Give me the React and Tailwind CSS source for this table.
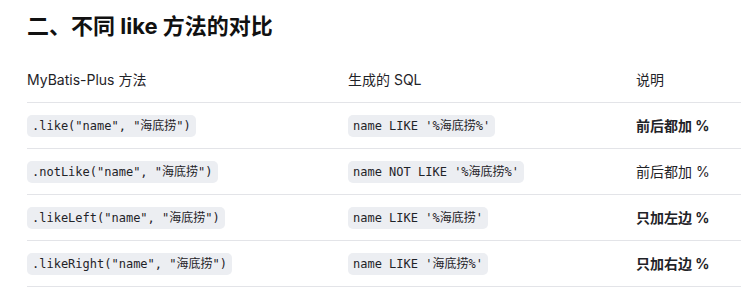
const rows = [
  { method: '.like("name", "海底捞")', sql: "name LIKE '%海底捞%'", note: "前后都加 %", bold: true },
  { method: '.notLike("name", "海底捞")', sql: "name NOT LIKE '%海底捞%'", note: "前后都加 %", bold: false },
  { method: '.likeLeft("name", "海底捞")', sql: "name LIKE '%海底捞'", note: "只加左边 %", bold: true },
  { method: '.likeRight("name", "海底捞")', sql: "name LIKE '海底捞%'", note: "只加右边 %", bold: true },
]

function Code({ children }) {
  return (
    <code className="inline-block rounded-[5px] bg-[#eceef2] px-[5px] leading-[22px] text-[12px] text-[#1f2328] font-['DejaVu_Sans_Mono','Noto_Sans_CJK_SC',monospace]">
      {children}
    </code>
  )
}

export default function App() {
  return (
    <div className="min-h-[293px] bg-white pl-[27px] text-[#1f2328] font-['Inter','Noto_Sans_CJK_SC',sans-serif]">
      <h2 className="pt-[11px] text-[22px] leading-[30px] font-bold text-[#111]">
        二、不同 like 方法的对比
      </h2>

      <div className="mt-[15px] text-[14px]">
        <div className="grid grid-cols-[321px_288px_1fr] h-[47px] items-center border-b border-[#e3e4e8]">
          <div>MyBatis-Plus 方法</div>
          <div>生成的 SQL</div>
          <div>说明</div>
        </div>
        {rows.map((r) => (
          <div
            key={r.method}
            className="grid grid-cols-[321px_288px_1fr] h-[46px] items-center border-b border-[#e3e4e8]"
          >
            <div>
              <Code>{r.method}</Code>
            </div>
            <div>
              <Code>{r.sql}</Code>
            </div>
            <div className={r.bold ? "font-bold" : ""}>{r.note}</div>
          </div>
        ))}
      </div>
    </div>
  )
}
